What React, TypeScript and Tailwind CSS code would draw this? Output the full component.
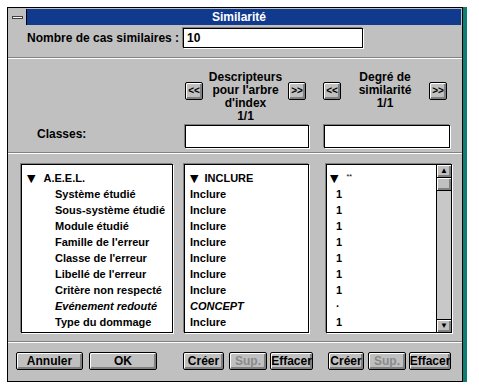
import React from 'react';

const raised =
  'bg-[#c0c0c0] border border-black rounded-[2px] shadow-[inset_1px_1px_0_#ffffff,inset_-2px_-2px_0_#808080]';
const sunken = 'bg-white border border-black shadow-[-1px_-1px_0_#808080,1px_1px_0_#ffffff]';

const leftItems: { label: string; italic?: boolean }[] = [
  { label: 'Système étudié' },
  { label: 'Sous-système étudié' },
  { label: 'Module étudié' },
  { label: "Famille de l'erreur" },
  { label: "Classe de l'erreur" },
  { label: "Libellé de l'erreur" },
  { label: 'Critère non respecté' },
  { label: 'Evénement redouté', italic: true },
  { label: 'Type du dommage' },
  { label: 'Gravité du dommage' },
];

const middleItems = leftItems.map((it) => (it.italic ? 'CONCEPT' : 'Inclure'));
const rightItems = leftItems.map((it) => (it.italic ? '·' : '1'));

const Triangle = () => (
  <span className="font-['DejaVu_Sans'] text-[11px] leading-none">▼</span>
);

const ArrowBtn: React.FC<{ label: string }> = ({ label }) => (
  <button
    className={`${raised} w-[18px] h-[18px] mt-[14px] flex items-center justify-center text-[10px] font-bold leading-none shrink-0`}
  >
    {label}
  </button>
);

const Btn: React.FC<{ label: string; w: string; disabled?: boolean }> = ({ label, w, disabled }) => (
  <button
    className={`${raised} ${w} h-[18px] flex items-center justify-center text-[12px] font-bold leading-none ${
      disabled ? 'text-[#8a8a8a]' : 'text-black'
    }`}
  >
    {label}
  </button>
);

const Separator = () => <div className="h-[2px] border-t border-[#808080] border-b border-b-white" />;

export default function App() {
  return (
    <div className="w-[479px] h-[387px] bg-white font-['Liberation_Sans',Arial,sans-serif] text-black select-none">
      <div className="flex pt-[7px] pl-[7px]">
        <div className="w-[456px] h-[375px] border border-black bg-[#c0c0c0] flex flex-col">
          {/* title bar */}
          <div className="mt-px mx-px h-[16px] flex bg-[#0f3a8e]">
            <div className="w-[18px] h-full bg-[#c0c0c0] border-r border-black flex items-center justify-center">
              <div className="w-[11px] h-[3px] bg-white border border-[#404040]" />
            </div>
            <div className="flex-1 flex items-center justify-center text-white text-[12px] font-bold pr-[10px]">
              Similarité
            </div>
          </div>

          {/* nombre de cas */}
          <div className="h-[32px] pt-[3px] flex items-start">
            <div className="h-[20px] flex items-center pl-[19px] w-[175px] text-[12px] font-bold">
              Nombre de cas similaires :
            </div>
            <div className={`${sunken} w-[180px] h-[20px] flex items-center px-[3px] text-[12px] font-bold`}>10</div>
          </div>
          <Separator />

          {/* descripteurs */}
          <div className="h-[93px] flex">
            <div className="w-[177px] flex items-end pb-[9px] pl-[29px] text-[12px] font-bold">Classes:</div>
            <div className="w-[124px] flex flex-col">
              <div className="h-[66px] pt-[9px] flex w-[121px]">
                <ArrowBtn label="<<" />
                <div className="flex-1 mt-[3px] text-center text-[12px] font-bold leading-[13px]">
                  Descripteurs
                  <br />
                  pour l'arbre
                  <br />
                  d'index
                  <br />
                  1/1
                </div>
                <ArrowBtn label=">>" />
              </div>
              <div className={`${sunken} h-[23px]`} />
            </div>
            <div className="w-[14px]" />
            <div className="w-[127px] flex flex-col">
              <div className="h-[66px] pt-[9px] flex w-[124px]">
                <ArrowBtn label="<<" />
                <div className="flex-1 mt-[3px] text-center text-[12px] font-bold leading-[13px]">
                  Degré de
                  <br />
                  similarité
                  <br />
                  1/1
                </div>
                <ArrowBtn label=">>" />
              </div>
              <div className={`${sunken} h-[23px] ml-px`} />
            </div>
          </div>
          <Separator />

          {/* lists */}
          <div className="h-[187px] pt-[10px] flex items-start">
            <div className={`${sunken} ml-[13px] w-[152px] h-[169px] overflow-hidden pt-[5px] text-[11px] font-bold`}>
              <div className="h-[16px] flex items-center pl-[5px] gap-[8px]">
                <Triangle />
                <span>A.E.E.L.</span>
              </div>
              {leftItems.map((it) => (
                <div
                  key={it.label}
                  className={`h-[16px] flex items-center pl-[33px] whitespace-nowrap ${it.italic ? 'italic' : ''}`}
                >
                  {it.label}
                </div>
              ))}
            </div>
            <div className={`${sunken} ml-[11px] w-[125px] h-[169px] overflow-hidden pt-[5px] text-[11px] font-bold`}>
              <div className="h-[16px] flex items-center pl-[5px] gap-[6px]">
                <Triangle />
                <span>INCLURE</span>
              </div>
              {middleItems.map((t, i) => (
                <div key={i} className={`h-[16px] flex items-center pl-[5px] ${t === 'CONCEPT' ? 'italic' : ''}`}>
                  {t}
                </div>
              ))}
            </div>
            <div className={`${sunken} ml-[17px] w-[126px] h-[169px] overflow-hidden flex text-[11px] font-bold`}>
              <div className="flex-1 pt-[5px]">
                <div className="h-[16px] flex items-center pl-[3px] gap-[8px]">
                  <Triangle />
                  <span className="text-[7px] font-normal self-start mt-[2px]">**</span>
                </div>
                {rightItems.map((t, i) => (
                  <div key={i} className="h-[16px] flex items-center pl-[9px]">
                    {t}
                  </div>
                ))}
              </div>
              <div className="w-[15px] border-l border-black bg-[#c8c8c8] flex flex-col">
                <div className={`${raised} rounded-none border-0 border-b h-[13px] flex items-center justify-center text-[8px] leading-none`}>
                  ▲
                </div>
                <div className={`${raised} rounded-none border-0 border-b h-[13px]`} />
                <div className="flex-1" />
                <div className={`${raised} rounded-none border-0 border-t h-[13px] flex items-center justify-center text-[8px] leading-none`}>
                  ▼
                </div>
              </div>
            </div>
          </div>
          <Separator />

          {/* buttons */}
          <div className="flex-1 pt-[9px] flex items-start pl-[8px]">
            <Btn label="Annuler" w="w-[67px]" />
            <div className="w-[6px]" />
            <Btn label="OK" w="w-[68px]" />
            <div className="w-[26px]" />
            <Btn label="Créer" w="w-[41px]" />
            <div className="w-[5px]" />
            <Btn label="Sup." w="w-[38px]" disabled />
            <div className="w-[3px]" />
            <Btn label="Effacer" w="w-[43px]" />
            <div className="w-[15px]" />
            <Btn label="Créer" w="w-[36px]" />
            <div className="w-[4px]" />
            <Btn label="Sup." w="w-[38px]" disabled />
            <div className="w-[3px]" />
            <Btn label="Effacer" w="w-[42px]" />
          </div>
        </div>
        <div className="w-[4px] h-[375px] bg-[#0f7d72]" />
      </div>
    </div>
  );
}
